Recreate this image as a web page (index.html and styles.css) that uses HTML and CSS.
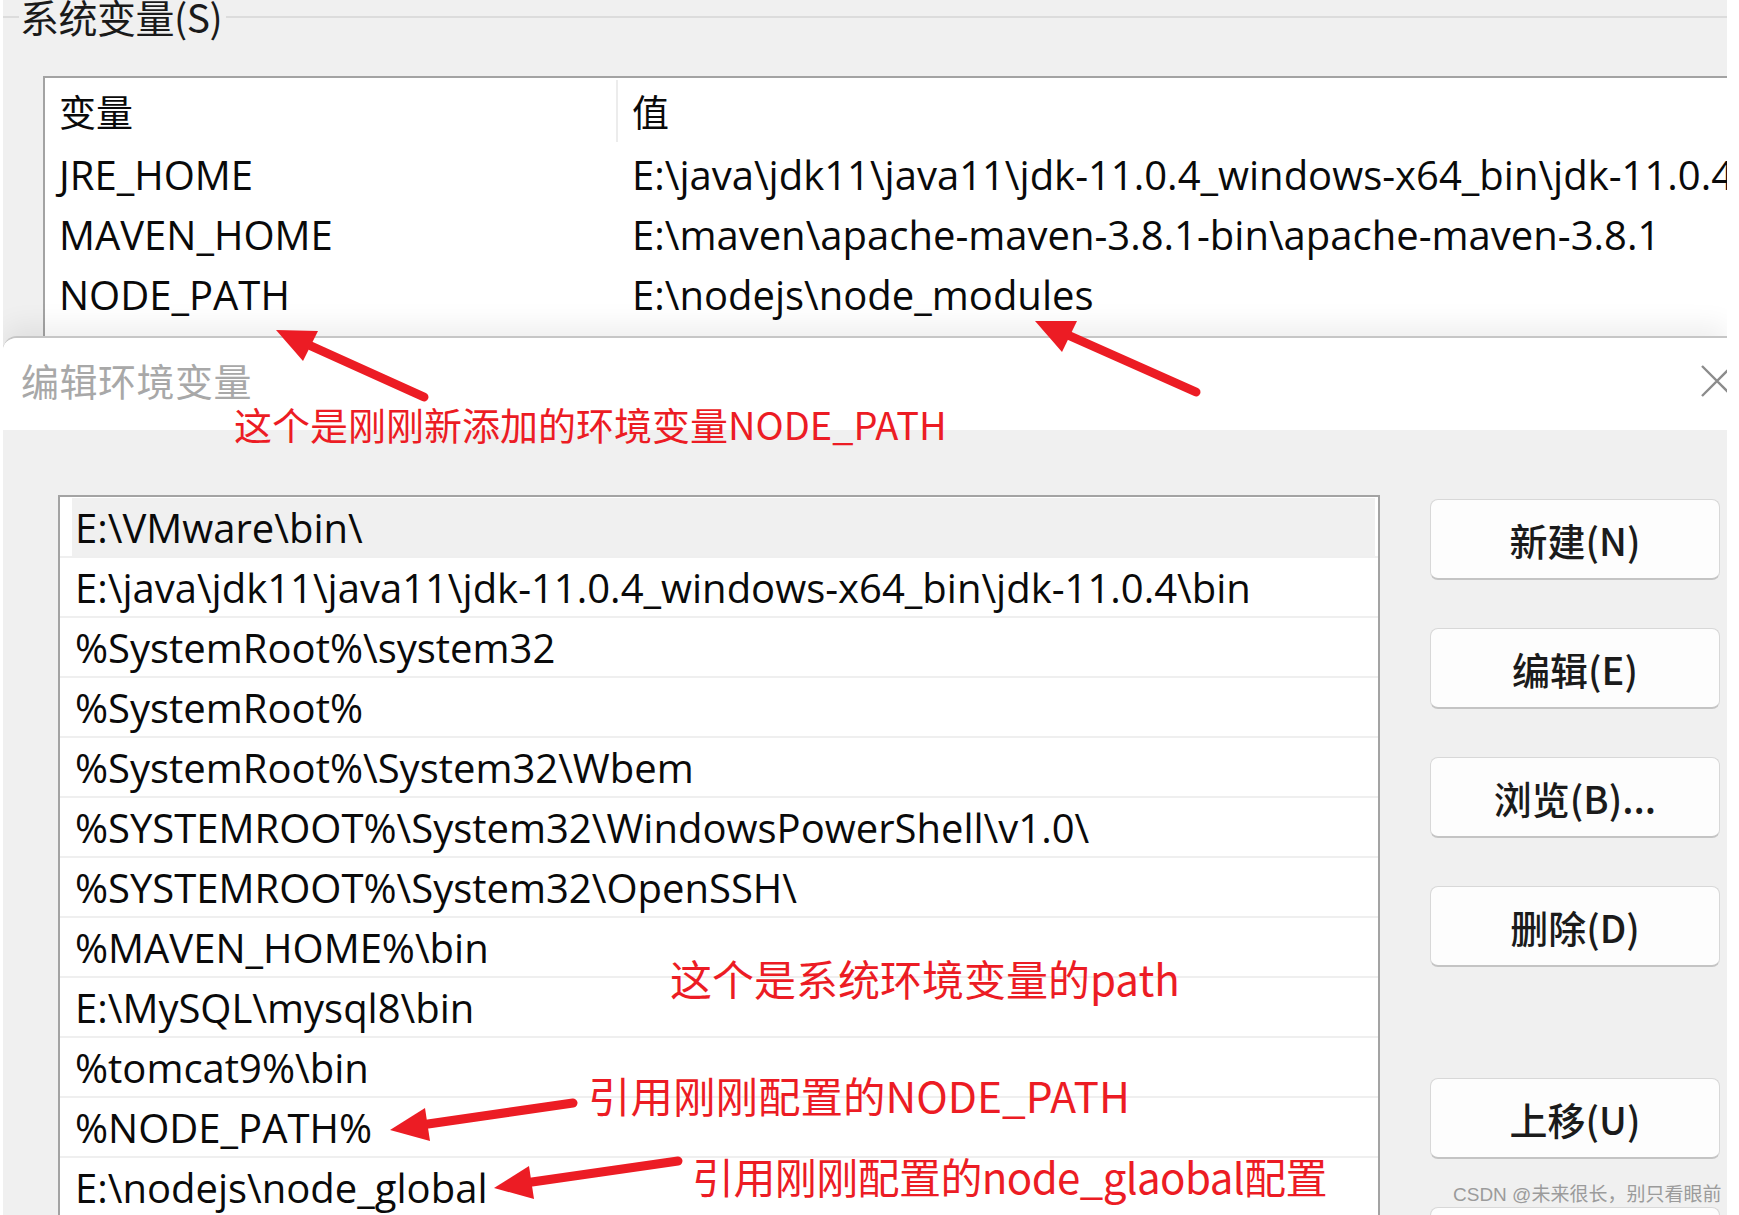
FILE: index.html
```html
<!DOCTYPE html>
<html lang="zh-CN">
<head>
<meta charset="utf-8">
<title>编辑环境变量</title>
<link rel="stylesheet" href="styles.css">
</head>
<body>
<div class="screen">
  <section class="sysvars">
    <div class="legend"><span class="legend-text">系统变量(S)</span></div>
    <div class="vartable">
      <div class="vrow vhead"><div class="vcell vname">变量</div><div class="vcell vval">值</div></div>
      <div class="vrow"><div class="vcell vname">JRE_HOME</div><div class="vcell vval">E:\java\jdk11\java11\jdk-11.0.4_windows-x64_bin\jdk-11.0.4</div></div>
      <div class="vrow"><div class="vcell vname">MAVEN_HOME</div><div class="vcell vval">E:\maven\apache-maven-3.8.1-bin\apache-maven-3.8.1</div></div>
      <div class="vrow"><div class="vcell vname">NODE_PATH</div><div class="vcell vval">E:\nodejs\node_modules</div></div>
    </div>
  </section>
  <section class="dialog">
    <div class="titlebar">
      <span class="dlg-title">编辑环境变量</span>
      <svg class="close" width="36" height="36" viewBox="0 0 36 36"><path d="M3 3 L33 33 M33 3 L3 33" stroke="#8c8c8c" stroke-width="2.4" fill="none"/></svg>
    </div>
    <div class="dlg-body">
      <div class="pathlist">
        <div class="prow sel">E:\VMware\bin\</div>
        <div class="prow">E:\java\jdk11\java11\jdk-11.0.4_windows-x64_bin\jdk-11.0.4\bin</div>
        <div class="prow">%SystemRoot%\system32</div>
        <div class="prow">%SystemRoot%</div>
        <div class="prow">%SystemRoot%\System32\Wbem</div>
        <div class="prow">%SYSTEMROOT%\System32\WindowsPowerShell\v1.0\</div>
        <div class="prow">%SYSTEMROOT%\System32\OpenSSH\</div>
        <div class="prow">%MAVEN_HOME%\bin</div>
        <div class="prow">E:\MySQL\mysql8\bin</div>
        <div class="prow">%tomcat9%\bin</div>
        <div class="prow">%NODE_PATH%</div>
        <div class="prow">E:\nodejs\node_global</div>
      </div>
      <div class="buttons">
        <div class="btn">新建(N)</div>
        <div class="btn">编辑(E)</div>
        <div class="btn">浏览(B)...</div>
        <div class="btn">删除(D)</div>
        <div class="btn gap-before">上移(U)</div>
        <div class="btn">下移(O)</div>
      </div>
    </div>
  </section>
</div>

<div class="note note1">这个是刚刚新添加的环境变量NODE_PATH</div>
<div class="note note2">这个是系统环境变量的path</div>
<div class="note note3">引用刚刚配置的NODE_PATH</div>
<div class="note note4">引用刚刚配置的node_glaobal配置</div>

<svg class="arrows" width="1739" height="1215" viewBox="0 0 1739 1215">
  <g stroke="#ec1c24" stroke-width="9" stroke-linecap="round" fill="none">
    <line x1="424" y1="397" x2="311" y2="346"/>
    <line x1="1196" y1="392" x2="1070" y2="336"/>
    <line x1="573" y1="1103" x2="428" y2="1124"/>
    <line x1="678" y1="1161" x2="532" y2="1182"/>
  </g>
  <g fill="#ec1c24">
    <polygon points="276,330 318,331 303,361"/>
    <polygon points="1035,321 1077,321 1062,352"/>
    <polygon points="390,1130 425,1108 430,1141"/>
    <polygon points="494,1188 529,1166 534,1199"/>
  </g>
</svg>

<div class="watermark">CSDN @未来很长，别只看眼前</div>
</body>
</html>
```

FILE: styles.css
```css
html, body {
  margin: 0;
  padding: 0;
}
body {
  width: 1739px;
  height: 1215px;
  overflow: hidden;
  position: relative;
  background: #ffffff;
  font-family: "Noto Sans CJK SC", sans-serif;
  color: #000;
}
.screen {
  margin-left: 3px;
  width: 1724px;
  height: 1215px;
  background: #f0f0f0;
  overflow: hidden;
  display: flex;
  flex-direction: column;
}

/* ---------- system variables group ---------- */
.sysvars {
  flex: none;
  height: 336px;
  overflow: hidden;
}
.legend {
  display: flex;
  align-items: flex-start;
  height: 40px;
}
.legend::before,
.legend::after {
  content: "";
  height: 2px;
  margin-top: 16px;
  background: #dcdcdc;
}
.legend::before {
  width: 16px;
}
.legend::after {
  flex: 1;
}
.legend-text {
  font-size: 39px;
  line-height: 40px;
  margin-top: -4px;
  color: #1a1a1a;
  padding: 0 4px 0 1px;
  letter-spacing: -0.5px;
}
.vartable {
  margin-top: 36px;
  margin-left: 40px;
  height: 320px;
  background: #fff;
  border-top: 2px solid #a3a3a3;
  border-left: 2px solid #a3a3a3;
}
.vrow {
  display: grid;
  grid-template-columns: 573px 1fr;
  height: 60px;
  align-items: center;
}
.vhead {
  height: 66px;
}
.vcell {
  font-family: "Open Sans", "Noto Sans CJK SC", sans-serif;
  font-size: 40px;
  white-space: nowrap;
  overflow: hidden;
  color: #0a0a0a;
}
.vname {
  padding-left: 14px;
}
.vval {
  padding-left: 14px;
}
.vhead .vcell {
  font-family: "Noto Sans CJK SC", sans-serif;
  font-size: 37px;
  height: 62px;
  display: flex;
  align-items: center;
}
.vhead .vname {
  border-right: 2px solid #ececec;
}

/* ---------- edit dialog ---------- */
.dialog {
  flex: 1;
  background: #f0f0f0;
  border-top: 2px solid #c6c6c6;
  border-top-left-radius: 14px;
  box-shadow: 0 -10px 28px rgba(0, 0, 0, 0.07);
  display: flex;
  flex-direction: column;
  overflow: hidden;
}
.titlebar {
  flex: none;
  height: 92px;
  box-sizing: border-box;
  padding-bottom: 10px;
  background: #fff;
  display: flex;
  align-items: center;
  justify-content: space-between;
  padding-left: 18px;
}
.dlg-title {
  font-size: 38px;
  color: #a8a8a8;
  letter-spacing: 0.5px;
}
.close {
  margin-right: -8px;
  margin-top: 4px;
}
.dlg-body {
  flex: 1;
  display: flex;
  padding-top: 65px;
  padding-left: 55px;
}
.pathlist {
  width: 1318px;
  background: #fff;
  border: 2px solid #a3a3a3;
  border-bottom: none;
  padding-top: 1px;
}
.prow {
  height: 58px;
  border-bottom: 2px solid #efefef;
  display: flex;
  align-items: center;
  padding-left: 15px;
  font-family: "Open Sans", "Noto Sans CJK SC", sans-serif;
  font-size: 40px;
  color: #0a0a0a;
  white-space: nowrap;
}
.prow.sel {
  background: linear-gradient(90deg, #fff 12px, #f0f0f0 12px, #f0f0f0 calc(100% - 3px), #fff calc(100% - 3px));
}
.buttons {
  margin-left: 50px;
  width: 290px;
  padding-top: 4px;
  display: flex;
  flex-direction: column;
  gap: 46px;
}
.btn {
  flex: none;
  height: 81px;
  box-sizing: border-box;
  background: #fdfdfd;
  border: 1px solid #d8d8d8;
  border-bottom: 2px solid #c4c4c4;
  border-radius: 8px;
  display: flex;
  align-items: center;
  justify-content: center;
  font-size: 38px;
  font-weight: 500;
  color: #1b1b1b;
}
.btn + .btn {
  margin-top: 2px;
}
.btn.gap-before {
  margin-top: 65px;
}

/* ---------- annotations ---------- */
.note {
  position: absolute;
  color: #ec1c24;
  font-family: "Noto Sans CJK SC", sans-serif;
  line-height: 1;
  white-space: nowrap;
}
.note1 {
  left: 234px;
  top: 405px;
  font-size: 38px;
}
.note2 {
  left: 670px;
  top: 957px;
  font-size: 42px;
}
.note3 {
  left: 588px;
  top: 1074px;
  font-size: 42.5px;
}
.note4 {
  left: 692px;
  top: 1155px;
  font-size: 42px;
  letter-spacing: -0.6px;
}
.arrows {
  position: absolute;
  left: 0;
  top: 0;
  pointer-events: none;
}
.watermark {
  position: absolute;
  left: 1453px;
  top: 1185px;
  font-family: "Liberation Sans", "Noto Sans CJK SC", sans-serif;
  font-size: 19px;
  line-height: 1;
  color: #9b9b9b;
  white-space: nowrap;
}
```
